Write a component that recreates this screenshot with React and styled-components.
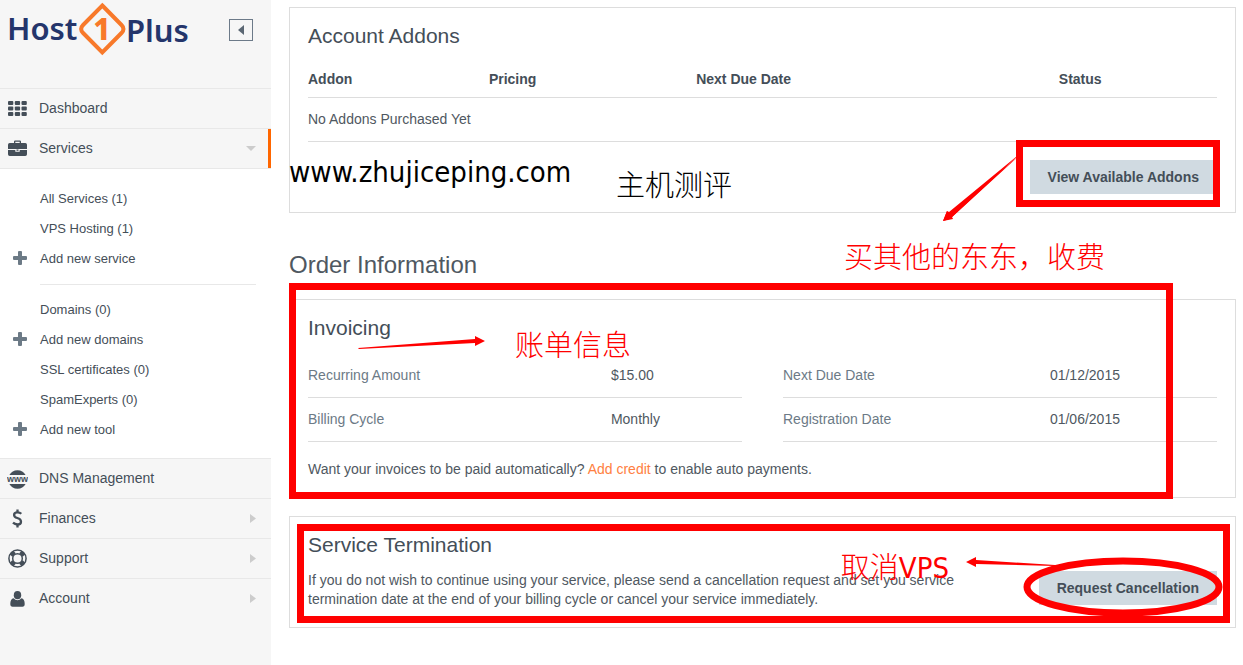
import { useState } from 'react';
import styled, { createGlobalStyle } from 'styled-components';

const serviceLinks = [
    { label: "All Services (1)" },
    { label: "VPS Hosting (1)" },
    { label: "Add new service", add: true },
]

const toolLinks = [
    { label: "Domains (0)" },
    { label: "Add new domains", add: true },
    { label: "SSL certificates (0)" },
    { label: "SpamExperts (0)" },
    { label: "Add new tool", add: true },
]

function Logo(){
    return(
        <LogoLink href="#" aria-label="Host1Plus">
            <svg width="184" height="56" viewBox="0 0 184 56">
                <g fontFamily="'Noto Sans', sans-serif" fontSize="31" fontWeight="600" fill="#24356b">
                    <text x="-1" y="40">Host</text>
                    <text x="118" y="42">Plus</text>
                </g>
                <path d="M94.300 5.500L113.500 25Q117.500 29 113.500 33L94.300 52.500L75.100 33Q71.100 29 75.100 25Z" fill="none" stroke="#f8792a" strokeWidth="4" />
                <text x="94" y="40" textAnchor="middle" fontFamily="'Noto Sans', sans-serif" fontSize="30" fontWeight="800" fill="#f8792a">1</text>
            </svg>
        </LogoLink>
    )
}

function GridIcon(){
    return(
        <svg width="19" height="15" viewBox="0 0 19 15" fill="#444e58">
            {[0, 5.500, 11].map(y => [0, 6.800, 13.500].map(x => (
                <rect key={`${x}-${y}`} x={x} y={y} width="5.300" height="4" rx="1" />
            )))}
        </svg>
    )
}

function BriefcaseIcon(){
    return(
        <svg width="19" height="18" viewBox="0 0 19 18" fill="#444e58">
            <path d="M6 3V1.600Q6 .5 7.100 .5H11.900Q13 .5 13 1.600V3H17.300Q19 3 19 4.700V9H0V4.700Q0 3 1.700 3ZM7.300 3H11.700V1.700H7.300Z" fillRule="evenodd" />
            <path d="M0 10H7.300V11.700H11.700V10H19V14.300Q19 16 17.300 16H1.700Q0 16 0 14.300Z" />
            <rect x="8.500" y="9.500" width="2" height="1.300" />
        </svg>
    )
}

function GlobeIcon(){
    return(
        <svg width="21" height="20" viewBox="0 0 21 20" fill="#444e58">
            <path d="M2.400 6A9.300 9.300 0 0 1 18.600 6Z" />
            <path d="M2.400 15A9.300 9.300 0 0 0 18.600 15Z" />
            <text x="10.500" y="13" textAnchor="middle" fontFamily="'Liberation Sans', sans-serif" fontSize="9" fontWeight="bold">www</text>
        </svg>
    )
}

function DollarIcon(){
    return(
        <svg width="11" height="19" viewBox="0 0 11 19" fill="none" stroke="#444e58" strokeWidth="2.300">
            <path d="M9.300 4.800Q7.800 3.300 5.500 3.300Q2.100 3.300 2.100 5.900Q2.100 8 5.300 9Q9 10.100 9 12.700Q9 15.500 5.500 15.500Q2.900 15.500 1 13.700" />
            <path d="M5.500 .4V3.300M5.500 15.500V18.600" />
        </svg>
    )
}

function SupportIcon(){
    return(
        <svg width="19" height="19" viewBox="0 0 19 19" fill="none" stroke="#444e58">
            <circle cx="9.500" cy="9.500" r="8.600" strokeWidth="1.500" />
            <circle cx="9.500" cy="9.500" r="4.800" strokeWidth="1.500" />
            <g strokeWidth="5">
                <path d="M3.600 3.600L6 6M13 13L15.400 15.400M15.400 3.600L13 6M6 13L3.600 15.400" />
            </g>
        </svg>
    )
}

function UserIcon(){
    return(
        <svg width="15" height="16" viewBox="0 0 15 16" fill="#444e58">
            <ellipse cx="7.500" cy="4.200" rx="3.700" ry="4.100" />
            <path d="M3.600 7.300Q5.200 9.200 7.500 9.200Q9.800 9.200 11.400 7.300Q14.700 7.800 14.700 13Q14.700 15.700 12.400 15.700H2.600Q.3 15.700 .3 13Q.3 7.800 3.600 7.300Z" />
        </svg>
    )
}

function PlusIcon(){
    return(
        <svg width="14" height="14" viewBox="0 0 14 14" fill="#6c7a86">
            <path d="M6 0H8Q9 0 9 1V5H13Q14 5 14 6V8Q14 9 13 9H9V13Q9 14 8 14H6Q5 14 5 13V9H1Q0 9 0 8V6Q0 5 1 5H5V1Q5 0 6 0Z" />
        </svg>
    )
}

function SubLinks({ items }){
    return(
        <SubList>
            {items.map(item => (
                <li key={item.label}>
                    <SubLink href="#">
                        <SubIcon>{item.add && <PlusIcon />}</SubIcon>
                        {item.label}
                    </SubLink>
                </li>
            ))}
        </SubList>
    )
}

function MenuItem({ icon, label, arrow, active, children }){
    return(
        <MenuRow>
            <MenuLink href="#" $active={active}>
                <MenuIcon>{icon}</MenuIcon>
                <MenuLabel>{label}</MenuLabel>
                {arrow === "down" && <svg width="10" height="5"><path d="M0 0H10L5 5Z" fill="#ccc" /></svg>}
                {arrow === "right" && <svg width="6" height="9"><path d="M0 0L6 4.500L0 9Z" fill="#ccc" /></svg>}
            </MenuLink>
            {children}
        </MenuRow>
    )
}

function Sidebar(){
    const [open, setOpen] = useState(true);
    return(
        <Aside>
            <SidebarTop>
                <Logo />
                <CollapseButton aria-label="Toggle menu" onClick={()=>setOpen(!open)}>
                    <svg width="6" height="10"><path d="M6 0V10L0 5Z" fill="#5b6773" /></svg>
                </CollapseButton>
            </SidebarTop>
            <nav>
                <Menu>
                    <MenuItem icon={<GridIcon />} label="Dashboard" />
                    <MenuItem icon={<BriefcaseIcon />} label="Services" arrow="down" active>
                        {open && (
                            <SubMenu>
                                <SubLinks items={serviceLinks} />
                                <SubDivider />
                                <SubLinks items={toolLinks} />
                            </SubMenu>
                        )}
                    </MenuItem>
                    <MenuItem icon={<GlobeIcon />} label="DNS Management" />
                    <MenuItem icon={<DollarIcon />} label="Finances" arrow="right" />
                    <MenuItem icon={<SupportIcon />} label="Support" arrow="right" />
                    <MenuItem icon={<UserIcon />} label="Account" arrow="right" />
                </Menu>
            </nav>
        </Aside>
    )
}

function Details({ rows, labelWidth }){
    return(
        <Table>
            <colgroup>
                <Col $width={labelWidth} />
                <col />
            </colgroup>
            <tbody>
                {rows.map(([name, value]) => (
                    <tr key={name}>
                        <NameCell scope="row">{name}</NameCell>
                        <Cell>{value}</Cell>
                    </tr>
                ))}
            </tbody>
        </Table>
    )
}

function AddonsCard(){
    return(
        <Card>
            <CardTitle>Account Addons</CardTitle>
            <Table>
                <colgroup>
                    <Col $width="19.9%" />
                    <Col $width="22.8%" />
                    <Col $width="39.9%" />
                    <col />
                </colgroup>
                <thead>
                    <tr>
                        <HeadCell>Addon</HeadCell>
                        <HeadCell>Pricing</HeadCell>
                        <HeadCell>Next Due Date</HeadCell>
                        <HeadCell>Status</HeadCell>
                    </tr>
                </thead>
                <tbody>
                    <tr><Cell colSpan="4">No Addons Purchased Yet</Cell></tr>
                </tbody>
            </Table>
            <Actions>
                <Button>View Available Addons</Button>
            </Actions>
            <Note $top="146px" $left="-1px" $color="#000">www.zhujiceping.com</Note>
            <Note $top="160px" $left="326px" $color="#000">主机测评</Note>
            <Drawing $top="142px" $right="210px" width="86" height="73">
                <path d="M83 3L12 68L14 68L4 71L8 61L10 65Z" fill="red" />
                <path d="M83 2L10 62L8 61L4 71L14 69L13 67Z" fill="red" />
            </Drawing>
            <Frame $top="132px" $right="15px" $width="204px" $height="67px" />
            <Note $top="232px" $right="130px" $color="red">买其他的东东，收费</Note>
        </Card>
    )
}

function InvoicingCard(){
    return(
        <Card>
            <CardTitle>Invoicing</CardTitle>
            <Columns>
                <Details labelWidth="69.8%" rows={[["Recurring Amount", "$15.00"], ["Billing Cycle", "Monthly"]]} />
                <Details labelWidth="61.5%" rows={[["Next Due Date", "01/12/2015"], ["Registration Date", "01/06/2015"]]} />
            </Columns>
            <CreditText>
                Want your invoices to be paid automatically? <a href="#">Add credit</a> to enable auto payments.
            </CreditText>
            <Frame $top="-17px" $left="-1px" $right="62px" $height="216px" />
            <Drawing $top="35px" $left="68px" width="128" height="15">
                <path d="M0 13L117 4V1L127 6L117 11V8L1 14Z" fill="red" />
            </Drawing>
            <Note $top="28px" $left="225px" $color="red">账单信息</Note>
        </Card>
    )
}

function TerminationCard(){
    return(
        <Card>
            <CardTitle>Service Termination</CardTitle>
            <Termination>
                <Text>
                    If you do not wish to continue using your service, please send a cancellation request and set you service
                    termination date at the end of your billing cycle or cancel your service immediately.
                </Text>
                <Button>Request Cancellation</Button>
            </Termination>
            <Frame $top="7px" $left="7px" $right="5px" $height="99px" />
            <Drawing $top="39px" $right="12px" width="258" height="64">
                <path d="M1 6L11 1V4L90 9V10L11 8V11Z" fill="red" />
                <ellipse cx="158" cy="31" rx="96" ry="26" fill="none" stroke="red" strokeWidth="7" />
            </Drawing>
            <Note $top="33px" $right="286px" $color="red">取消VPS</Note>
        </Card>
    )
}

function App(){
    return(
        <Page>
            <GlobalStyle />
            <Sidebar />
            <Main>
                <AddonsCard />
                <SectionTitle>Order Information</SectionTitle>
                <CardStack>
                    <InvoicingCard />
                    <TerminationCard />
                </CardStack>
            </Main>
        </Page>
    )
}

const GlobalStyle = createGlobalStyle`
    * {
        box-sizing: border-box;
    }
    body {
        margin: 0;
        background-color: #fff;
        color: #4f5861;
        font-family: "Liberation Sans", Arial, sans-serif;
        font-size: 14px;
        line-height: 19px;
    }
    svg {
        display: block;
        flex-shrink: 0;
    }
`

const Page = styled.div`
    display: flex;
    min-height: 100vh;
`

const Aside = styled.aside`
    width: 271px;
    flex-shrink: 0;
    background-color: #f6f6f6;
`

const SidebarTop = styled.div`
    height: 88px;
    padding: 0 18px 0 8px;
    display: flex;
    justify-content: space-between;
    align-items: flex-start;
`

const LogoLink = styled.a`
    display: block;
`

const CollapseButton = styled.button`
    width: 24px;
    height: 22px;
    margin-top: 19px;
    padding: 0;
    display: flex;
    justify-content: center;
    align-items: center;
    border: 1px solid #6c7a89;
    background-color: transparent;
    cursor: pointer;
`

const Menu = styled.ul`
    margin: 0;
    padding: 0;
    list-style: none;
`

const MenuRow = styled.li`
    border-top: 1px solid #e8e8e8;
`

const MenuLink = styled.a`
    height: 39px;
    padding-left: 8px;
    padding-right: ${props => props.$active ? "12px" : "15px"};
    border-right: ${props => props.$active ? "3px solid #ff6600" : "none"};
    display: flex;
    align-items: center;
    gap: 12px;
    color: #444e58;
    text-decoration: none;
`

const MenuIcon = styled.span`
    width: 19px;
    display: flex;
    justify-content: center;
`

const MenuLabel = styled.span`
    flex: 1;
`

const SubMenu = styled.div`
    padding: 14px 0;
    border-top: 1px solid #e8e8e8;
    background-color: #fff;
`

const SubList = styled.ul`
    margin: 0;
    padding: 0;
    list-style: none;
`

const SubLink = styled.a`
    height: 30px;
    padding-left: 13px;
    display: flex;
    align-items: center;
    gap: 13px;
    color: #444e58;
    font-size: 13px;
    text-decoration: none;
`

const SubIcon = styled.span`
    width: 14px;
`

const SubDivider = styled.hr`
    margin: 11px 15px 9px 40px;
    border: none;
    border-top: 1px solid #e8e8e8;
`

const Main = styled.main`
    flex: 1;
    min-width: 0;
    padding: 7px 7px 0 18px;
`

const Card = styled.section`
    position: relative;
    padding: 16px 18px 18px;
    border: 1px solid #ddd;
`

const CardStack = styled.div`
    display: flex;
    flex-direction: column;
    gap: 18px;
`

const SectionTitle = styled.h2`
    margin: 36px 0 18px;
    font-size: 24px;
    font-weight: normal;
    line-height: 32px;
`

const CardTitle = styled.h3`
    margin: 0 0 14px;
    color: #444e58;
    font-size: 21px;
    font-weight: normal;
    line-height: 24px;
`

const Table = styled.table`
    width: 100%;
    table-layout: fixed;
    border-collapse: separate;
    border-spacing: 0;
`

const Col = styled.col`
    width: ${props => props.$width};
`

const HeadCell = styled.th`
    height: 36px;
    padding: 0;
    border-bottom: 1px solid #ddd;
    color: #444e58;
    text-align: left;
`

const Cell = styled.td`
    height: 44px;
    padding: 0;
    border-bottom: 1px solid #ddd;
`

const NameCell = styled.th`
    height: 44px;
    padding: 0;
    border-bottom: 1px solid #ddd;
    color: #6c7a86;
    font-weight: normal;
    text-align: left;
`

const Columns = styled.div`
    display: grid;
    grid-template-columns: 1fr 1fr;
    gap: 41px;
`

const Actions = styled.div`
    margin-top: 18px;
    display: flex;
    justify-content: flex-end;
`

const Button = styled.button`
    height: 34px;
    padding: 0 18px;
    flex-shrink: 0;
    border: none;
    background-color: #d0dae1;
    color: #444e58;
    font-family: inherit;
    font-size: 14px;
    font-weight: bold;
    cursor: pointer;
`

const Text = styled.p`
    margin: 0;
    a {
        color: #ff8042;
        text-decoration: none;
    }
`

const CreditText = styled(Text)`
    margin-top: 18px;
`

const Termination = styled.div`
    display: flex;
    justify-content: space-between;
    gap: 40px;
`

/* hand-drawn marks that lie over the cards */
const Mark = styled.div`
    position: absolute;
    top: ${props => props.$top};
    left: ${props => props.$left};
    right: ${props => props.$right};
    pointer-events: none;
`

const Frame = styled(Mark)`
    width: ${props => props.$width};
    height: ${props => props.$height};
    border: 7px solid red;
`

const Note = styled(Mark)`
    color: ${props => props.$color};
    font-family: "DejaVu Sans Condensed", "Noto Sans CJK SC", sans-serif;
    font-size: 29px;
    font-weight: 300;
    line-height: 36px;
    white-space: nowrap;
    z-index: 1;
`

const Drawing = styled(Mark).attrs({ as: "svg" })``

export default App
